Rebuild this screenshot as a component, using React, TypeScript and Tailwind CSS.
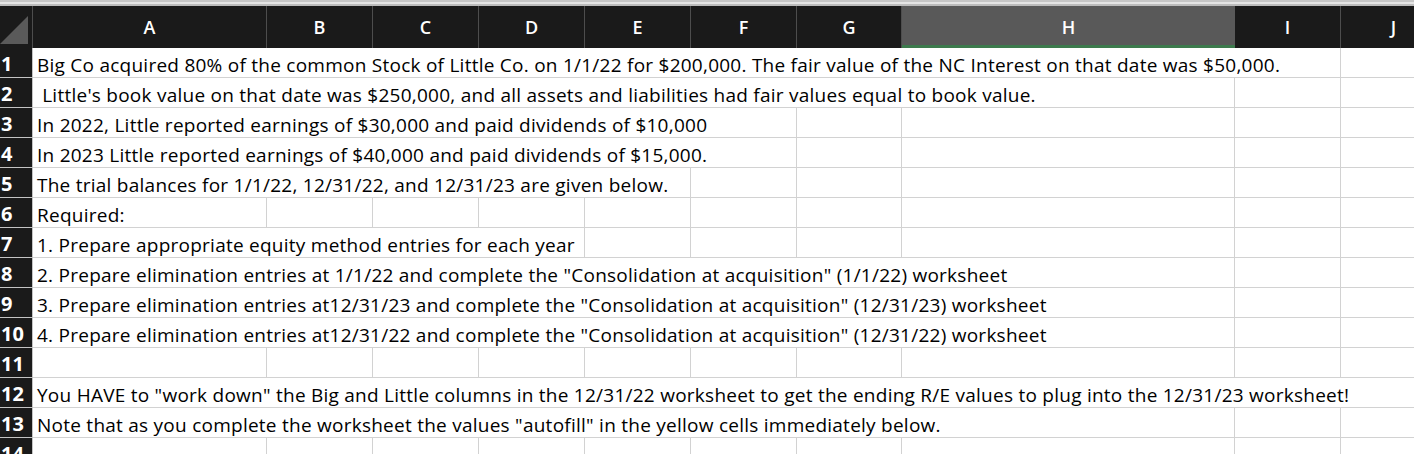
import React from 'react'

const COLS = ['A', 'B', 'C', 'D', 'E', 'F', 'G', 'H', 'I', 'J']

const SPAN: Record<number, string> = {
  1: 'col-span-1',
  2: 'col-span-2',
  3: 'col-span-3',
  4: 'col-span-4',
  5: 'col-span-5',
  6: 'col-span-6',
  7: 'col-span-7',
  8: 'col-span-8',
  9: 'col-span-9',
  10: 'col-span-10',
}

// text lives in column A and spills over empty neighbours, so each row says how many columns it covers
const ROWS: { text: string; span: number }[] = [
  { text: 'Big Co acquired 80% of the common Stock of Little Co. on 1/1/22 for $200,000. The fair value of the NC Interest on that date was $50,000.', span: 9 },
  { text: " Little's book value on that date was $250,000, and all assets and liabilities had fair values equal to book value.", span: 8 },
  { text: 'In 2022, Little reported earnings of $30,000 and paid dividends of $10,000', span: 6 },
  { text: 'In 2023 Little reported earnings of $40,000 and paid dividends of $15,000.', span: 6 },
  { text: 'The trial balances for 1/1/22, 12/31/22, and 12/31/23 are given below.', span: 5 },
  { text: 'Required:', span: 1 },
  { text: '1. Prepare appropriate equity method entries for each year', span: 4 },
  { text: '2. Prepare elimination entries at 1/1/22 and complete the "Consolidation at acquisition" (1/1/22) worksheet', span: 8 },
  { text: '3. Prepare elimination entries at12/31/23 and complete the "Consolidation at acquisition" (12/31/23) worksheet', span: 8 },
  { text: '4. Prepare elimination entries at12/31/22 and complete the "Consolidation at acquisition" (12/31/22) worksheet', span: 8 },
  { text: '', span: 1 },
  { text: 'You HAVE to "work down" the Big and Little columns in the 12/31/22 worksheet to get the ending R/E values to plug into the 12/31/23 worksheet!', span: 10 },
  { text: 'Note that as you complete the worksheet the values "autofill" in the yellow cells immediately below.', span: 8 },
  { text: '', span: 1 },
]

const GRID = 'grid grid-cols-[33px_234px_106px_106px_106px_106px_106px_105px_333px_106px_106px]'

function HeaderRow() {
  return (
    <div className={`${GRID} h-[42px] bg-[#1a1a1a] text-white text-[18px] font-semibold`}>
      <div className="relative border-r border-[#4d4d4d]">
        <svg className="absolute left-0 top-[9px]" width="28" height="29" viewBox="0 0 28 29">
          <polygon points="0,29 28,29 28,1" fill="#5a5a5a" />
        </svg>
      </div>
      {COLS.map((c) =>
        c === 'H' ? (
          <div key={c} className="flex items-center justify-center bg-[#595959] border-b-[3px] border-[#3d7a4d] pt-[3px]">
            {c}
          </div>
        ) : (
          <div key={c} className="flex items-center justify-center border-r border-[#4d4d4d]">
            {c}
          </div>
        )
      )}
    </div>
  )
}

function SheetRow({ n, text, span }: { n: number; text: string; span: number }) {
  const rest = COLS.length - span
  return (
    <div className={`${GRID} h-[30px]`}>
      <div className="flex items-end bg-[#1a1a1a] text-white text-[20px] font-bold leading-[24px] pl-[1px] pb-[1px] border-b border-r border-[#c4c4c4]">
        {n}
      </div>
      <div className={`${SPAN[span]} flex items-end border-b border-r border-[#d2d2d2] pl-[4px] pb-0 text-[19px] tracking-[0.25px] leading-[24px] text-black whitespace-pre overflow-hidden`}>
        {text}
      </div>
      {Array.from({ length: rest }).map((_, i) => (
        <div key={i} className="border-b border-r border-[#d2d2d2]" />
      ))}
    </div>
  )
}

export default function App() {
  return (
    <div className="w-[1414px] h-[454px] overflow-hidden bg-white font-['Open_Sans','Liberation_Sans',sans-serif]">
      <div className="h-[6px] bg-[#e4e4e4] border-t-2 border-b-2 border-t-[#c6c6c6] border-b-[#bcbcbc]" />
      <HeaderRow />
      {ROWS.map((r, i) => (
        <SheetRow key={i} n={i + 1} text={r.text} span={r.span} />
      ))}
    </div>
  )
}
